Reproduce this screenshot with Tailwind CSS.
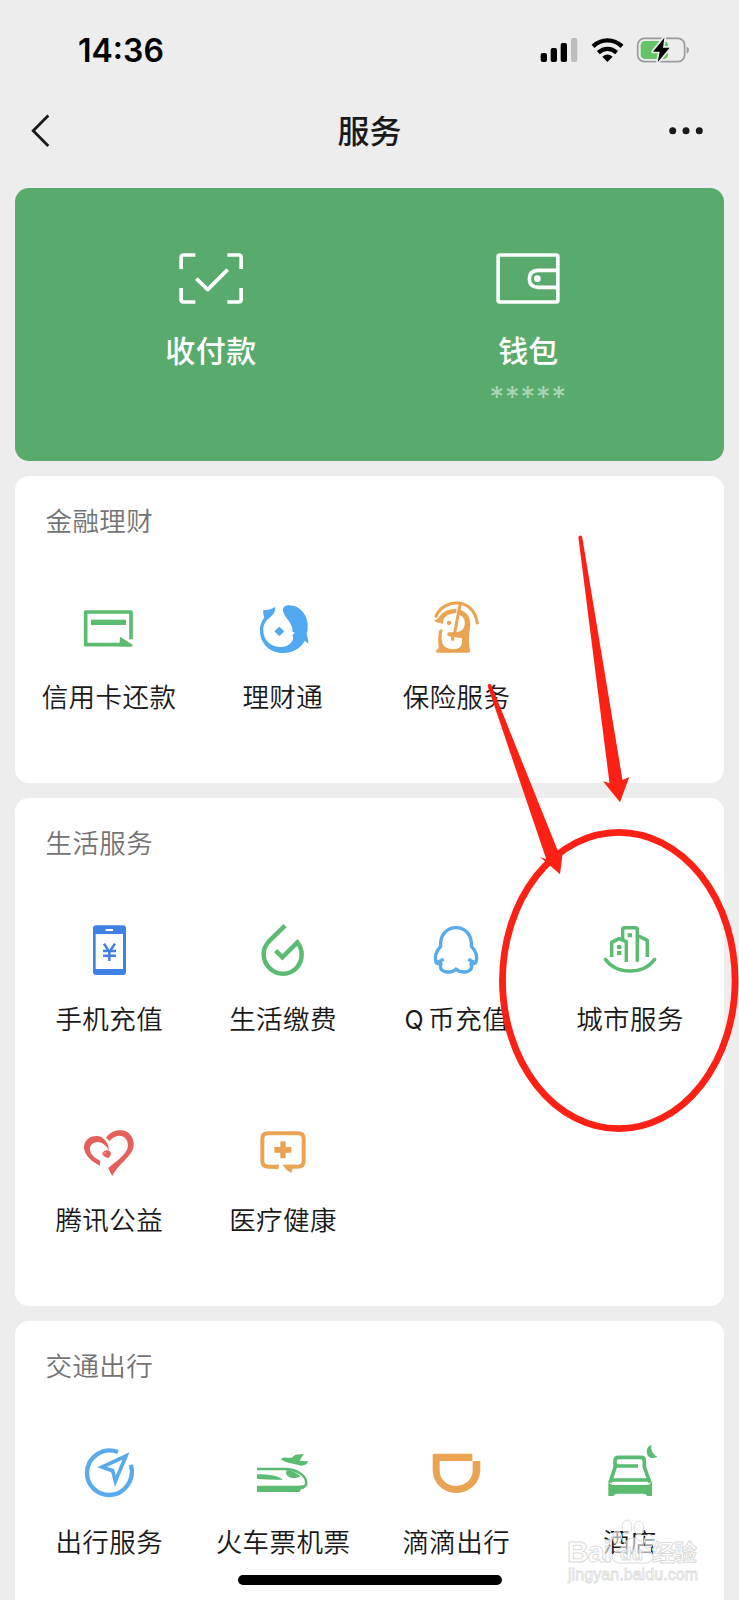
<!DOCTYPE html>
<html lang="zh-CN">
<head>
<meta charset="utf-8">
<title>服务</title>
<script src="https://cdn.jsdelivr.net/npm/@tailwindcss/browser@4"></script>
</head>
<body class="bg-[#ededed]">
<div class="relative w-[739px] h-[1600px] overflow-hidden bg-[#ededed] text-[#191919] font-['Noto_Sans_CJK_SC',sans-serif]">

  <!-- Status bar -->
  <header class="flex h-[98px] items-center justify-between pl-[78px] pr-[49px]">
    <span class="pt-[3px] text-[32px] font-semibold leading-none text-black tracking-[0px] font-['Inter',sans-serif]">14:36</span>
    <svg class="h-[28px] w-[150px]" viewBox="60 42 450 84">
      <rect x="62" y="96" width="19" height="27" rx="6"/>
      <rect x="92" y="81" width="19" height="42" rx="6"/>
      <rect x="122" y="66" width="19" height="57" rx="6"/>
      <rect x="153" y="51" width="19" height="72" rx="6" fill="#bcbcbc"/>
      <path d="M219 76C244 52 281 52 306 76M235 95C252 80 273 80 290 95" fill="none" stroke="#000" stroke-width="13"/>
      <path d="M247 107Q262 94 278 107L262 123Z"/>
      <rect x="353" y="52" width="141" height="70" rx="20" fill="none" stroke="#9b9b9b" stroke-width="5"/>
      <path d="M500 77Q507 80 507 87Q507 94 500 98Z" fill="#9b9b9b"/>
      <rect x="362" y="60" width="82" height="54" rx="13" fill="#65c466"/>
      <path d="M433 50L399 92H419L413 124L449 80H429Z" fill="#000" stroke="#ededed" stroke-width="10" paint-order="stroke" stroke-linejoin="round"/>
    </svg>
  </header>

  <!-- Navigation bar -->
  <nav class="flex h-[90px] items-start justify-between pl-[30px] pr-[36px] pt-[10px]">
    <svg class="h-[44px] w-[40px]" viewBox="0 0 40 44" fill="none" stroke="#191919" stroke-width="2.8"><path d="M18.3 7.5L3.2 22.7L18.3 38"/></svg>
    <h1 class="text-[32px] font-medium leading-[42px]">服务</h1>
    <svg class="h-[44px] w-[34px]" viewBox="0 0 34 44" fill="#191919"><circle cx="3.7" cy="22.7" r="3.5"/><circle cx="17" cy="22.7" r="3.5"/><circle cx="30.3" cy="22.7" r="3.5"/></svg>
  </nav>

  <main class="flex flex-col gap-[15px] px-[15px]">
    <section class="grid h-[273px] grid-cols-2 rounded-[14px] bg-[#58ab6d] px-[37px] pt-[62px] text-white">
      <div class="flex flex-col items-center">
        <svg class="h-[56px] w-[64px]" viewBox="116 60 192 168" fill="none" stroke="#fff" stroke-width="11">
          <path d="M165 75H130Q122.500 75 122.500 83V117M261 75H295Q302.500 75 302.500 83V117M165 216H130Q122.500 216 122.500 208V174M261 216H295Q302.500 216 302.500 208V174"/>
          <path d="M168 146L202 179L262 119" stroke-linejoin="round"/>
        </svg>
        <span class="mt-[22px] pl-[0.500px] text-[30px] font-medium leading-[42px] tracking-[0.500px]">收付款</span>
      </div>
      <div class="flex flex-col items-center">
        <svg class="h-[56px] w-[64px]" viewBox="1068 60 192 168" fill="none" stroke="#fff" stroke-width="11">
          <rect x="1074.500" y="75" width="179" height="141" rx="5"/>
          <path d="M1253 121H1194Q1168 122 1168 146Q1168 171 1194 172H1253"/>
          <circle cx="1192" cy="146" r="10" fill="#fff" stroke="none"/>
        </svg>
        <span class="mt-[22px] text-[30px] font-medium leading-[42px]">钱包</span>
        <span class="mt-[11px] text-[29px] leading-[32px] tracking-[1px] text-white/50 font-['Inter',sans-serif]">*****</span>
      </div>
    </section>

    <section class="h-[307px] rounded-[14px] bg-white px-[7px] pt-[24px]">
      <h2 class="pl-[23.500px] text-[26.500px] font-[350] leading-[40px] tracking-[0.400px] text-[#737373] h-[66px]">金融理财</h2>
      <div class="grid grid-cols-4">
        <div class="flex h-[201px] flex-col items-center pt-[30px]">
          <svg class="size-[64px]" viewBox="231 408 192 192" fill="#5abb71">
            <path d="M393 538V456H257V554H362" fill="none" stroke="#5abb71" stroke-width="11" stroke-linejoin="round"/>
            <rect x="273" y="479" width="105" height="16"/>
            <path d="M360 530L399 555Q398 560 392 560H358Z"/>
          </svg>
          <span class="mt-[18px] whitespace-nowrap pl-[0.500px] text-[26.500px] font-[350] leading-[36px] tracking-[0.500px]">信用卡还款</span>
        </div>
        <div class="flex h-[201px] flex-col items-center pt-[30px]">
          <svg class="size-[64px]" viewBox="752 408 192 192" fill="#50a8f0">
            <path d="M789 450Q809 451 825 440Q826 458 808 473C792 485 788 499 789 513C790 547 820 564 846 561C868 559 885 540 876 525L884 518L876 515C881 490 849 473 848 450C848 441 855 436 867 436C898 436 920 464 922 492Q923 510 919 522Q925 538 924 551L913 542C902 565 876 579 848 579C806 579 780 548 779 515C778 495 784 482 792 473Q787 462 789 450Z"/>
            <path d="M837 500L852 514L837 529L822 514Z"/>
          </svg>
          <span class="mt-[18px] whitespace-nowrap pl-[0.500px] text-[26.500px] font-[350] leading-[36px] tracking-[0.500px]">理财通</span>
        </div>
        <div class="flex h-[201px] flex-col items-center pt-[30px]">
          <svg class="size-[64px]" viewBox="73 18 192 192" fill="#e9a352">
            <path d="M109 79C130 25 222 20 233 99" fill="none" stroke="#e9a352" stroke-width="9" stroke-linecap="round"/>
            <path d="M103 91Q112 89 118 82C126 67 145 57 170 56V69C150 70 136 78 131 90L130 101Q114 101 103 91Z"/>
            <circle cx="148" cy="99" r="6.500"/>
            <path d="M182 60C205 66 216 90 211 114C206 145 208 168 212 184Q211 188 204 188H113Q107 187 110 181L117 175Q113 147 118 123Q124 114 129 121C122 142 126 166 138 172Q158 183 179 173Q189 167 187 145L164 141V150Q159 156 154 150V140L144 137Q140 130 148 127L166 127Q192 126 195 104C197 88 190 78 179 75Z"/>
            <path d="M182 41L172 91L165 130" fill="none" stroke="#e9a352" stroke-width="9"/>
          </svg>
          <span class="mt-[18px] whitespace-nowrap pl-[0.500px] text-[26.500px] font-[350] leading-[36px] tracking-[0.500px]">保险服务</span>
        </div>
      </div>
    </section>

    <section class="h-[508px] rounded-[14px] bg-white px-[7px] pt-[24px]">
      <h2 class="pl-[23.500px] text-[26.500px] font-[350] leading-[40px] tracking-[0.400px] text-[#737373] h-[66px]">生活服务</h2>
      <div class="grid grid-cols-4">
        <div class="flex h-[201px] flex-col items-center pt-[30px]">
          <svg class="size-[64px]" viewBox="111 114 192 192">
            <rect x="159" y="136" width="99" height="149" rx="9" fill="#3f80e3"/>
            <path d="M167 162H249V267H167ZM197 147H219V153H197Z" fill="#fff"/>
            <path d="M192 191L208 216L225 191M208 214V243M189 213H228M189 227H228" fill="none" stroke="#3f80e3" stroke-width="7.500"/>
          </svg>
          <span class="mt-[18px] whitespace-nowrap pl-[1px] text-[26.500px] font-[350] leading-[36px] tracking-[0.500px]">手机充值</span>
        </div>
        <div class="flex h-[201px] flex-col items-center pt-[30px]">
          <svg class="size-[64px]" viewBox="634 114 192 192" fill="none" stroke="#5abb71" stroke-width="13.500">
            <path d="M736 137L687 185C674 199 672 210 672 222C672 256 700 281 730 281C763 281 786 255 786 223Q786 204 773 187L728 232L708 212"/>
          </svg>
          <span class="mt-[18px] whitespace-nowrap pl-[1px] text-[26.500px] font-[350] leading-[36px] tracking-[0.500px]">生活缴费</span>
        </div>
        <div class="flex h-[201px] flex-col items-center pt-[30px]">
          <svg class="size-[64px]" viewBox="103 294 192 192" fill="none" stroke="#58aaeb" stroke-width="10" stroke-linejoin="round">
            <path d="M153 428Q142 434 139 427C133 408 142 391 153 379C150 346 171 323 199 323C227 323 248 346 245 379C257 391 265 408 259 427Q256 434 243 428"/>
            <path d="M162 418L147 425Q158 431 152 436C151 451 163 457 176 456Q192 456 199 447Q207 456 222 456C235 457 247 451 246 436Q240 431 250 425L236 418"/>
          </svg>
          <span class="mt-[18px] whitespace-nowrap pl-[1px] text-[26.500px] font-[350] leading-[36px] tracking-[0.500px]"><span class="mr-[4px] text-[25px] font-normal font-['Inter',sans-serif]">Q</span>币充值</span>
        </div>
        <div class="flex h-[201px] flex-col items-center pt-[30px]">
          <svg class="size-[64px]" viewBox="624 294 192 192" fill="none" stroke="#5abb71" stroke-width="10.500">
            <path d="M665 411V367L687 356L709 365V426" stroke-linejoin="round"/>
            <path d="M698 357V329Q698 323 704 323H736Q742 323 742 329V425" stroke-linejoin="round"/>
            <path d="M746 348L772 361V411" stroke-linejoin="round"/>
            <path d="M646 418C680 465 761 465 794 418" stroke-linecap="round"/>
            <path d="M681 381H694M681 399H694M713 346H726" stroke-width="12"/>
          </svg>
          <span class="mt-[18px] whitespace-nowrap text-[26.500px] font-[350] leading-[36px] tracking-[0.500px]">城市服务</span>
        </div>
        <div class="flex h-[201px] flex-col items-center pt-[30px]">
          <svg class="size-[64px]" viewBox="111 27 192 192" fill="#e55f5b">
            <path d="M180 167C158 157 134 137 132 114C131 91 150 77 172 78C192 80 208 101 206 121C200 107 187 96 173 96C157 96 148 108 150 121C152 136 169 147 181 153Q179 160 180 167Z"/>
            <path d="M198 83C212 64 229 59 245 61C268 63 282 83 281 106C280 138 236 160 217 198C211 188 207 181 205 174C222 157 258 136 263 113C267 91 254 77 237 77Q221 78 208 94Q205 87 198 83Z"/>
            <path d="M186 130Q192 120 203 121Q212 123 213 132Q210 142 204 144Q190 141 186 130Z"/>
            <path d="M190 130L198 128" stroke="#f6b5b2" stroke-width="3"/>
          </svg>
          <span class="mt-[18px] whitespace-nowrap pl-[1px] text-[26.500px] font-[350] leading-[36px] tracking-[0.500px]">腾讯公益</span>
        </div>
        <div class="flex h-[201px] flex-col items-center pt-[30px]">
          <svg class="size-[64px]" viewBox="634 27 192 192" fill="#e9a352">
            <path d="M717 170H685Q668 170 668 154V86Q668 70 685 70H775Q792 70 792 86V154Q792 170 775 170H745" fill="none" stroke="#e9a352" stroke-width="12"/>
            <path d="M699 176L711 164H719L713 176Z"/>
            <path d="M728 164H762L755 189Q738 180 728 164Z"/>
            <path d="M722 94H738V111H755V128H738V145H722V128H704V111H722Z"/>
          </svg>
          <span class="mt-[18px] whitespace-nowrap pl-[1px] text-[26.500px] font-[350] leading-[36px] tracking-[0.500px]">医疗健康</span>
        </div>
      </div>
    </section>

    <section class="h-[307px] rounded-[14px] bg-white px-[7px] pt-[24px]">
      <h2 class="pl-[23.500px] text-[26.500px] font-[350] leading-[40px] tracking-[0.400px] text-[#737373] h-[66px]">交通出行</h2>
      <div class="grid grid-cols-4">
        <div class="flex h-[201px] flex-col items-center pt-[30px]">
          <svg class="size-[64px]" viewBox="231 453 192 192" fill="none" stroke="#58aaeb" stroke-width="13">
            <path d="M354 486C310 470 261 500 261 549C261 586 291 615 328 615C372 615 405 572 393 524"/>
            <path d="M378 498L306 531L338 542L346 574Z" stroke-width="11"/>
          </svg>
          <span class="mt-[18px] whitespace-nowrap pl-[1px] text-[26.500px] font-[350] leading-[36px] tracking-[0.500px]">出行服务</span>
        </div>
        <div class="flex h-[201px] flex-col items-center pt-[30px]">
          <svg class="size-[64px]" viewBox="753 453 192 192" fill="#5abb71">
            <path d="M771 537H853C888 537 919 555 919 579Q919 590 904 594" fill="none" stroke="#5abb71" stroke-width="7.500"/>
            <path d="M771 587H893Q911 587 917 582Q919 594 903 598L899 606H771Z"/>
            <path d="M771 553C803 553 829 555 849 569Q812 570 771 567Z"/>
            <path d="M860 541Q879 540 902 559Q890 566 877 564Q859 560 858 548Z"/>
            <path d="M842 508Q849 500 861 503L875 503L886 494L911 492L899 512L924 514Q923 525 905 527L879 521Q856 518 842 508Z"/>
          </svg>
          <span class="mt-[18px] whitespace-nowrap pl-[1px] text-[26.500px] font-[350] leading-[36px] tracking-[0.500px]">火车票机票</span>
        </div>
        <div class="flex h-[201px] flex-col items-center pt-[30px]">
          <svg class="size-[64px]" viewBox="163 453 192 192" fill="#e9a352">
            <path d="M194 491H308V513H210V541C210 569 232 588 259 588C287 588 309 568 309 541V513H332V538C332 580 299 609 260 609C221 609 189 580 189 538V496Q189 491 194 491Z"/>
          </svg>
          <span class="mt-[18px] whitespace-nowrap text-[26.500px] font-[350] leading-[36px] tracking-[0.500px]">滴滴出行</span>
        </div>
        <div class="flex h-[201px] flex-col items-center pt-[30px]">
          <svg class="size-[64px]" viewBox="684 453 192 192" fill="#5abb71">
            <path d="M720 578L735 533V512Q735 502 746 502H812Q823 502 823 512V531L840 578M734 528H804M726 570H836" fill="none" stroke="#5abb71" stroke-width="11" stroke-linejoin="round"/>
            <path d="M715 573Q720 586 734 585H826Q841 586 846 573V618H831Q829 611 818 611H743Q733 611 731 618H715Z"/>
            <path d="M844 465Q841 490 862 500Q849 507 838 502C825 490 829 470 844 465Z"/>
          </svg>
          <span class="mt-[18px] whitespace-nowrap text-[26.500px] font-[350] leading-[36px] tracking-[0.500px]">酒店</span>
        </div>
      </div>
    </section>
  </main>

  <!-- Home indicator -->
  <div class="absolute left-[238px] top-[1575px] h-[10px] w-[264px] rounded-full bg-black"></div>

  <!-- Watermark -->
  <svg class="absolute left-[560px] top-[1512px] h-[80px] w-[150px]" viewBox="560 1512 150 80" fill="#fff" fill-opacity=".6" stroke="#dcdcdc" stroke-width="1">
    <ellipse cx="627" cy="1527" rx="4.800" ry="7"/>
    <ellipse cx="639" cy="1528" rx="4.800" ry="7"/>
    <ellipse cx="617" cy="1537" rx="4.500" ry="6.500"/>
    <ellipse cx="649" cy="1541" rx="4.500" ry="6.500"/>
    <path d="M633 1538C625 1538 623 1549 615 1552C608 1558 615 1565 626 1563H640C652 1565 657 1557 650 1551C643 1547 641 1538 633 1538Z"/>
    <text x="567" y="1562" font-family="Liberation Sans" font-size="30" font-weight="700" textLength="45">Bai</text>
    <text x="620" y="1560" font-family="Liberation Sans" font-size="19" font-weight="700">du</text>
    <text x="652" y="1561" font-family="Noto Sans CJK SC" font-size="23" font-weight="700" textLength="45">经验</text>
    <text x="568" y="1580" font-family="Liberation Sans" font-size="16" textLength="130" stroke-width=".8">jingyan.baidu.com</text>
  </svg>

  <!-- Hand-drawn highlight over the page -->
  <svg class="absolute inset-0 h-[1600px] w-[739px]" viewBox="0 0 739 1600" fill="#fc2114">
    <ellipse cx="618.800" cy="980.500" rx="116.300" ry="148.200" fill="none" stroke="#fc2114" stroke-width="6.800"/>
    <path d="M578.400 537.500Q578.600 535.500 580.500 535.500Q582 535.600 582.200 537L622.500 780L629.300 777L620 802.300L603 781.300L609.500 783.300Z"/>
    <path d="M487.600 686Q487.600 684 489.500 683.800Q491 684 491.500 685.500L557.500 850L562.700 853L560 874.300L540 857L546.300 859.200Z"/>
  </svg>
</div>
</body>
</html>
